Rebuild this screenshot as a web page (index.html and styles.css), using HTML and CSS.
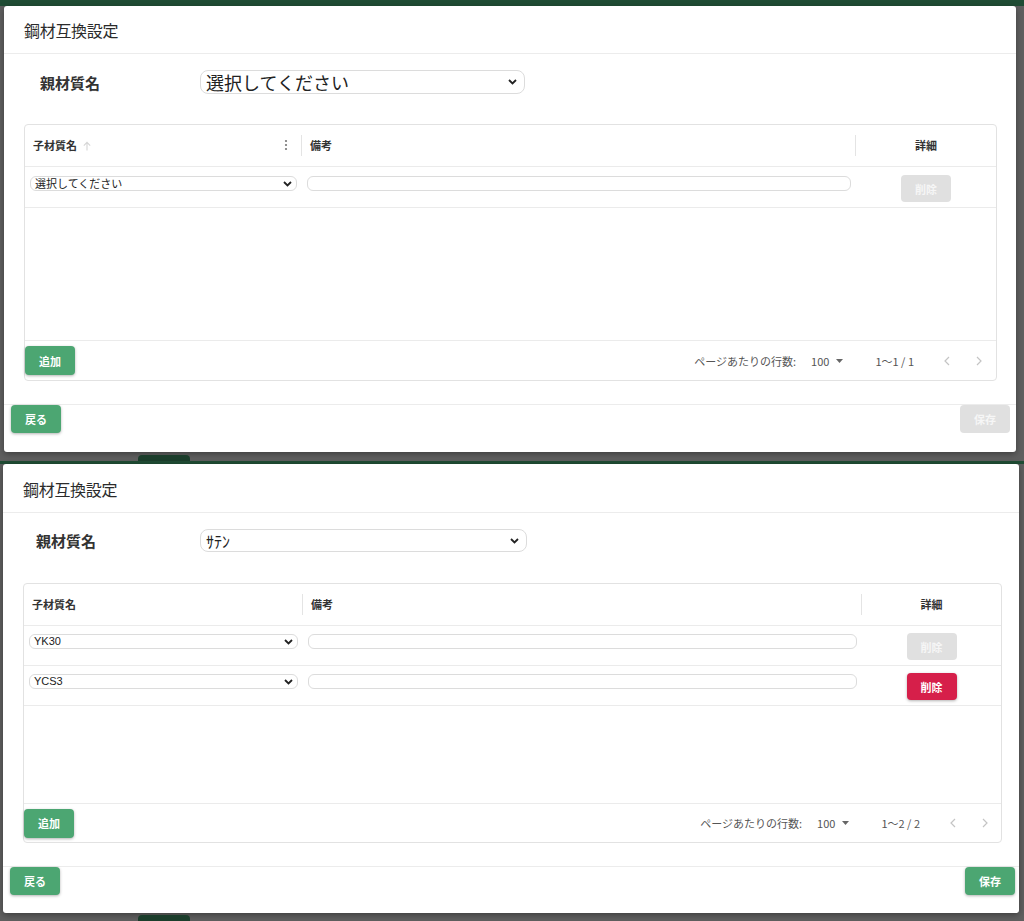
FILE: index.html
```html
<!DOCTYPE html>
<html lang="ja">
<head>
<meta charset="utf-8">
<title>鋼材互換設定</title>
<link rel="stylesheet" href="styles.css">
</head>
<body>
<div class="shot shot1">
  <div class="appbar"></div>
  <div class="dialog">
    <div class="dlg-title">鋼材互換設定</div>
    <div class="dlg-body">
      <div class="parent-row">
        <div class="parent-label">親材質名</div>
        <div class="select big"><span class="sel-text">選択してください</span><svg class="chev" width="9" height="6" viewBox="0 0 9 6"><path d="M1 1l3.5 3.5L8 1" stroke="#222" stroke-width="1.8" fill="none"/></svg></div>
      </div>
      <div class="card">
        <div class="grid-head">
          <div class="hcell">
            <span class="htext">子材質名</span>
            <svg class="sort" width="10" height="10" viewBox="0 0 10 10"><path d="M5 9.5V1.5M1.8 4.6L5 1.4l3.2 3.2" stroke="#d6d6d6" stroke-width="1.1" fill="none"/></svg>
            <span class="fill"></span>
            <svg class="kebab" width="4" height="12" viewBox="0 0 4 12"><circle cx="2" cy="2" r="1.1" fill="#777"/><circle cx="2" cy="6" r="1.1" fill="#777"/><circle cx="2" cy="10" r="1.1" fill="#777"/></svg>
            <span class="sep"></span>
          </div>
          <div class="hcell">
            <span class="htext">備考</span>
            <span class="fill"></span>
            <span class="sep"></span>
          </div>
          <div class="hcell center"><span class="htext">詳細</span></div>
        </div>
        <div class="grid-row">
          <div class="cell c1"><div class="select small"><span class="sel-text">選択してください</span><svg class="chev" width="9" height="6" viewBox="0 0 9 6"><path d="M1 1l3.5 3.5L8 1" stroke="#222" stroke-width="1.8" fill="none"/></svg></div></div>
          <div class="cell c2"><div class="input"></div></div>
          <div class="cell c3"><div class="btn disabled del">削除</div></div>
        </div>
        <div class="grid-empty"></div>
        <div class="grid-foot">
          <div class="btn green">追加</div>
          <span class="fill"></span>
          <span class="rpp-label">ページあたりの行数:</span>
          <span class="rpp-val">100<svg class="tri" width="7" height="4" viewBox="0 0 7 4"><path d="M0 0h7L3.5 4z" fill="#666"/></svg></span>
          <span class="range">1〜1 / 1</span>
          <svg class="nav prev" width="6" height="10" viewBox="0 0 6 10"><path d="M5 1L1 5l4 4" stroke="#c4c4c4" stroke-width="1.2" fill="none"/></svg>
          <svg class="nav next" width="6" height="10" viewBox="0 0 6 10"><path d="M1 1l4 4-4 4" stroke="#c4c4c4" stroke-width="1.2" fill="none"/></svg>
        </div>
      </div>
    </div>
    <div class="dlg-actions">
      <div class="btn green">戻る</div>
      <div class="btn disabled">保存</div>
    </div>
  </div>
  <div class="bump"></div>
</div>

<div class="shot shot2">
  <div class="appbar"></div>
  <div class="dialog">
    <div class="dlg-title">鋼材互換設定</div>
    <div class="dlg-body">
      <div class="parent-row">
        <div class="parent-label">親材質名</div>
        <div class="select big"><span class="sel-text kana">ｻﾃﾝ</span><svg class="chev" width="9" height="6" viewBox="0 0 9 6"><path d="M1 1l3.5 3.5L8 1" stroke="#222" stroke-width="1.8" fill="none"/></svg></div>
      </div>
      <div class="card">
        <div class="grid-head">
          <div class="hcell">
            <span class="htext">子材質名</span>
            <span class="fill"></span>
            <span class="sep"></span>
          </div>
          <div class="hcell">
            <span class="htext">備考</span>
            <span class="fill"></span>
            <span class="sep"></span>
          </div>
          <div class="hcell center"><span class="htext">詳細</span></div>
        </div>
        <div class="grid-row">
          <div class="cell c1"><div class="select small"><span class="sel-text latin">YK30</span><svg class="chev" width="9" height="6" viewBox="0 0 9 6"><path d="M1 1l3.5 3.5L8 1" stroke="#222" stroke-width="1.8" fill="none"/></svg></div></div>
          <div class="cell c2"><div class="input"></div></div>
          <div class="cell c3"><div class="btn disabled del">削除</div></div>
        </div>
        <div class="grid-row">
          <div class="cell c1"><div class="select small"><span class="sel-text latin">YCS3</span><svg class="chev" width="9" height="6" viewBox="0 0 9 6"><path d="M1 1l3.5 3.5L8 1" stroke="#222" stroke-width="1.8" fill="none"/></svg></div></div>
          <div class="cell c2"><div class="input"></div></div>
          <div class="cell c3"><div class="btn red del">削除</div></div>
        </div>
        <div class="grid-empty"></div>
        <div class="grid-foot">
          <div class="btn green">追加</div>
          <span class="fill"></span>
          <span class="rpp-label">ページあたりの行数:</span>
          <span class="rpp-val">100<svg class="tri" width="7" height="4" viewBox="0 0 7 4"><path d="M0 0h7L3.5 4z" fill="#666"/></svg></span>
          <span class="range">1〜2 / 2</span>
          <svg class="nav prev" width="6" height="10" viewBox="0 0 6 10"><path d="M5 1L1 5l4 4" stroke="#c4c4c4" stroke-width="1.2" fill="none"/></svg>
          <svg class="nav next" width="6" height="10" viewBox="0 0 6 10"><path d="M1 1l4 4-4 4" stroke="#c4c4c4" stroke-width="1.2" fill="none"/></svg>
        </div>
      </div>
    </div>
    <div class="dlg-actions">
      <div class="btn green">戻る</div>
      <div class="btn green">保存</div>
    </div>
  </div>
  <div class="bump"></div>
</div>
</body>
</html>
```

FILE: styles.css
```css
* { box-sizing: border-box; }

html, body {
  margin: 0;
  padding: 0;
}

body {
  width: 1024px;
  height: 921px;
  overflow: hidden;
  background: #5f5f5f;
  font-family: "Noto Sans CJK JP", "Noto Sans", sans-serif;
  color: #333;
}

.shot {
  display: flex;
  flex-direction: column;
}

.shot1 { height: 461px; }
.shot2 { height: 460px; }

.appbar {
  background: #1f4c34;
  flex: none;
}
.shot1 .appbar { height: 6px; }
.shot2 .appbar { height: 3px; }

.dialog {
  background: #fff;
  border-radius: 3px;
  box-shadow: 0 2px 6px rgba(0, 0, 0, 0.35);
  display: flex;
  flex-direction: column;
  flex: none;
}
.shot1 .dialog { margin-left: 4px; width: 1012px; height: 446px; }
.shot2 .dialog { margin-left: 3px; width: 1016px; height: 449px; }

.bump {
  width: 52px;
  height: 6px;
  margin-left: 138px;
  margin-top: 3px;
  background: #1b3d2b;
  border-radius: 4px 4px 0 0;
}
.shot2 .bump { margin-top: 2px; }

.dlg-title {
  height: 48px;
  border-bottom: 1px solid #ececec;
  padding-left: 20px;
  display: flex;
  align-items: center;
  font-size: 16px;
  letter-spacing: -0.3px;
  color: #2b2b2b;
  flex: none;
}
.shot2 .dlg-title { height: 49px; padding-left: 20px; padding-top: 2px; }

.dlg-body {
  flex: 1;
  padding: 0 19px 0 20px;
}
.shot2 .dlg-body { padding: 0 17px 0 20px; }

.parent-row {
  display: flex;
  align-items: center;
  margin-top: 16px;
  height: 24px;
}
.shot2 .parent-row { height: 23px; }

.parent-label {
  width: 176px;
  padding-left: 16px;
  font-size: 15px;
  font-weight: 700;
  color: #333;
}
.shot2 .parent-label { width: 177px; padding-left: 13px; }

.select {
  display: flex;
  align-items: center;
  border: 1px solid #dcdcdc;
  background: #fff;
  color: #222;
}
.select .sel-text { flex: 1; white-space: nowrap; }
.select .chev { flex: none; }

.select.big {
  width: 325px;
  height: 24px;
  border-radius: 8px;
  padding: 0 7px 0 5px;
  font-size: 18px;
}
.shot2 .select.big { width: 327px; height: 23px; }
.select.big .sel-text { line-height: 22px; }
.sel-text.kana { font-size: 16px; }

.select.small {
  width: 267px;
  height: 15px;
  border-radius: 6px;
  padding: 0 4px 0 4px;
  font-size: 11px;
  margin-top: 1px;
}
.shot2 .select.small { width: 269px; }
.select.small .sel-text { line-height: 13px; }
.sel-text.latin { font-family: "Liberation Sans", Arial, sans-serif; font-size: 11px; }

.card {
  margin-top: 30px;
  border: 1px solid #e2e2e2;
  border-radius: 4px;
}
.shot2 .card { margin-top: 31px; }

.grid-head, .grid-row {
  display: grid;
  grid-template-columns: 277px 1fr 140px;
}
.shot2 .grid-head, .shot2 .grid-row { grid-template-columns: 279px 1fr 139px; }

.grid-head {
  height: 42px;
  border-bottom: 1px solid #ebebeb;
}

.hcell {
  display: flex;
  align-items: center;
  padding-left: 8px;
  padding-bottom: 1px;
}
.hcell.center { justify-content: center; padding-left: 0; }

.htext {
  font-size: 11px;
  font-weight: 700;
  color: #333;
}

.sort { margin-left: 5px; margin-top: 1px; }
.kebab { margin-right: 13px; }

.fill { flex: 1; }

.sep {
  width: 1px;
  height: 21px;
  background: #e4e4e4;
}

.grid-row {
  height: 41px;
  border-bottom: 1px solid #ebebeb;
}
.shot2 .grid-row { height: 40px; }

.cell {
  display: flex;
  align-items: flex-start;
  padding-top: 8px;
}
.cell.c1 { padding-left: 5px; }
.cell.c2 { padding: 8px 5px 0 5px; }
.cell.c3 { justify-content: center; }
.shot2 .cell { padding-top: 7px; }
.shot2 .cell.c2 { padding: 7px 5px 0 5px; }

.input {
  width: 100%;
  height: 15px;
  margin-top: 1px;
  border: 1px solid #dcdcdc;
  border-radius: 6px;
}

.btn {
  width: 50px;
  height: 28px;
  border-radius: 4px;
  display: flex;
  align-items: center;
  justify-content: center;
  font-size: 11px;
  font-weight: 700;
  color: #fff;
  flex: none;
}
.btn.green {
  background: #4ca672;
  box-shadow: 0 1px 3px rgba(0, 0, 0, 0.3);
}
.btn.red {
  background: #d61f4a;
  box-shadow: 0 1px 3px rgba(0, 0, 0, 0.3);
}
.btn.disabled {
  background: #e0e0e0;
  color: #f6f6f6;
}
.btn.del { height: 27px; width: 50px; }

.grid-empty { height: 132px; }
.shot2 .grid-empty { height: 97px; }

.grid-foot {
  height: 40px;
  border-top: 1px solid #ebebeb;
  display: flex;
  align-items: center;
  font-size: 11px;
  color: #555;
}
.grid-foot .btn { height: 29px; }
.shot2 .grid-foot { height: 39px; }

.rpp-label { white-space: nowrap; }
.rpp-val {
  margin-left: 15px;
  display: flex;
  align-items: center;
  gap: 7px;
}
.range { margin-left: 32px; white-space: nowrap; }
.nav.prev { margin-left: 30px; }
.nav.next { margin-left: 26px; margin-right: 14px; }
.shot2 .nav.next { margin-right: 13px; }

.dlg-actions {
  height: 48px;
  border-top: 1px solid #ececec;
  display: flex;
  justify-content: space-between;
  align-items: flex-start;
  padding: 0 6px 0 7px;
  flex: none;
}
.shot2 .dlg-actions { height: 47px; padding: 0 4px 0 7px; }
```
